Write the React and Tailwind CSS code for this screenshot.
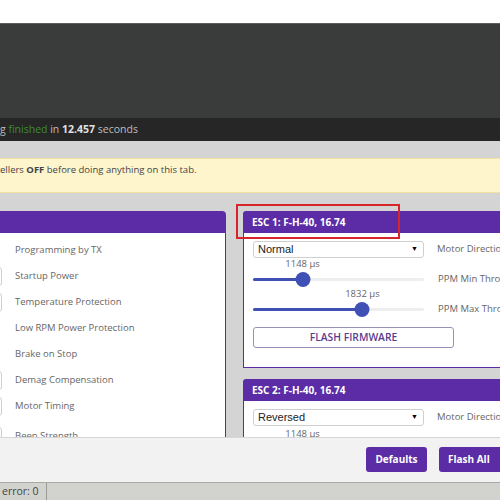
import React from 'react';

const purple = 'bg-[#5b2ca6]';

const leftRows = [
  { label: 'Programming by TX', kind: 'check' },
  { label: 'Startup Power', kind: 'select' },
  { label: 'Temperature Protection', kind: 'select' },
  { label: 'Low RPM Power Protection', kind: 'check' },
  { label: 'Brake on Stop', kind: 'check' },
  { label: 'Demag Compensation', kind: 'select' },
  { label: 'Motor Timing', kind: 'select' },
  { label: 'Beep Strength', kind: 'select' },
];

const Select = ({ value }) => (
  <div className="w-[171px] h-[17px] shrink-0 bg-white border border-[#cfcfcf] rounded-[3px] flex items-center justify-between pl-[4px] pr-[5px] font-['Liberation_Sans',sans-serif] text-[11px] text-[#222]">
    <span>{value}</span>
    <span className="text-[7px] text-black">▼</span>
  </div>
);

const Slider = ({ value, pct, label }) => (
  <div className="flex items-end h-[30px]">
    <div className="relative w-[171px] h-[30px] shrink-0">
      <div
        className="absolute top-0 -translate-x-1/2 text-[9.5px] leading-[12px] text-[#666] whitespace-nowrap"
        style={{ left: `${pct}%` }}
      >
        {value} μs
      </div>
      <div className="absolute left-0 right-0 top-[20px] h-[3px] bg-[#eeeeee] rounded-full" />
      <div className="absolute left-0 top-[20px] h-[3px] bg-[#3f51b5] rounded-full" style={{ width: `${pct}%` }} />
      <div
        className="absolute top-[14px] w-[15px] h-[15px] -translate-x-1/2 rounded-full bg-[#3f51b5]"
        style={{ left: `${pct}%` }}
      />
    </div>
    <span className="ml-[14px] h-[18px] leading-[18px] text-[9.5px] text-[#666] whitespace-nowrap">{label}</span>
  </div>
);

const EscPanel = ({ title, direction, children }) => (
  <div className="w-[290px]">
    <div className={`${purple} h-[22px] rounded-tl-[3px] flex items-center px-[9px] text-white text-[10px] font-bold`}>
      {title}
    </div>
    <div className="bg-white border-l border-b border-[#5b2ca6] px-[9px] pt-[8px]">
      <div className="flex items-center">
        <Select value={direction} />
        <span className="ml-[13px] text-[9.5px] text-[#666] whitespace-nowrap">Motor Direction</span>
      </div>
      {children}
    </div>
  </div>
);

export default function App() {
  return (
    <div className="w-[500px] h-[500px] overflow-hidden flex flex-col font-['Open_Sans',sans-serif] bg-white">
      <div className="h-[23px] bg-white shrink-0" />
      <div className="h-[95px] shrink-0 bg-[#3a3c3b] border-t border-[#5c5e5d]" />
      <div className="h-[23px] shrink-0 bg-[#262626] flex items-center text-[10.5px] text-[#bdbdbd] whitespace-nowrap">
        <span>g&nbsp;</span>
        <span className="text-[#3c8d2f]">finished</span>
        <span>&nbsp;in&nbsp;</span>
        <b className="text-[#e0e0e0]">12.457</b>
        <span>&nbsp;seconds</span>
      </div>

      <div className="relative flex-1 bg-[#d4d4d4] overflow-hidden pt-[17px]">
        <div className="h-[35px] bg-[#fef5cd] border-y border-[#f2e2a2] pt-[4px] text-[9.5px] text-[#444] whitespace-nowrap">
          ellers <b>OFF</b> before doing anything on this tab.
        </div>

        <div className="flex mt-[18px] gap-[17px]">
          <div className="w-[266px] shrink-0 ml-[-40px]">
            <div className={`${purple} h-[22px] rounded-tr-[4px]`} />
            <div className="bg-white border-r border-[#5b2ca6] pt-[4px] h-[260px]">
              {leftRows.map((row, i) => (
                <div key={row.label} className={`flex items-center h-[26px] ${i === 7 ? 'mt-[4px]' : ''}`}>
                  <div className="w-[42px] shrink-0 flex items-center">
                    {row.kind === 'select' ? (
                      <div className="w-[42px] h-[19px] border border-[#cfcfcf] rounded-[3px] bg-white" />
                    ) : (
                      <div className="w-[13px] h-[13px] ml-[10px] border border-[#bbb] rounded-[2px]" />
                    )}
                  </div>
                  <span className="ml-[13px] text-[9.5px] text-[#666] whitespace-nowrap">{row.label}</span>
                </div>
              ))}
            </div>
          </div>

          <div className="flex flex-col gap-[11px]">
            <EscPanel title="ESC 1: F-H-40, 16.74" direction="Normal">
              <Slider value={1148} pct={29} label="PPM Min Throttle" />
              <Slider value={1832} pct={64} label="PPM Max Throttle" />
              <div className="mt-[9px] mb-[19px] w-[201px] h-[21px] border border-[#9a8fb8] rounded-[3px] flex items-center justify-center text-[10.3px] font-semibold text-[#5b3d8f]">
                FLASH FIRMWARE
              </div>
            </EscPanel>
            <EscPanel title="ESC 2: F-H-40, 16.74" direction="Reversed">
              <div className="h-[2px]" />
              <Slider value={1148} pct={29} label="PPM Min Throttle" />
              <div className="h-[60px]" />
            </EscPanel>
          </div>
        </div>

        <div className="absolute left-[236px] top-[63px] w-[164px] h-[35px] border-2 border-[#d7262b]" />
      </div>

      <div className="h-[45px] shrink-0 bg-[#f2f2f2] border-t border-[#d6d6d6] flex justify-end items-start pt-[9px] gap-[12px] pr-0">
        <div className={`${purple} w-[61px] h-[25px] rounded-[3px] flex items-center justify-center text-white text-[10px] font-bold`}>
          Defaults
        </div>
        <div className={`${purple} w-[64px] h-[25px] rounded-l-[3px] flex items-center justify-start pl-[9px] text-white text-[10px] font-bold mr-[-3px]`}>
          Flash All
        </div>
      </div>

      <div className="h-[18px] shrink-0 bg-[#d2d2ce] border-t border-[#a9a9a5] flex items-center text-[10.5px] text-[#444]">
        <span className="w-[47px] pl-[2px] border-r border-[#9a9a96] h-full flex items-center">error: 0</span>
      </div>
    </div>
  );
}
